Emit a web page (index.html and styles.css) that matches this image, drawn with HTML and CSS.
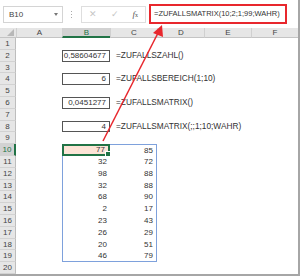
FILE: index.html
```html
<!DOCTYPE html>
<html lang="de">
<head>
    <meta charset="UTF-8">
    <title>ZUFALLSMATRIX</title>
    <link rel="stylesheet" href="styles.css">
</head>
<body>
<div class="window">
    <div class="toolbar">
        <div class="name-box">B10 <span class="caret"></span></div>
        <div class="grip"><span></span><span></span><span></span></div>
        <div class="fx-buttons">
            <span class="fx-btn">&#x2715;</span>
            <span class="fx-btn">&#x2713;</span>
            <span class="fx-btn fx"><i>f</i><small>x</small></span>
        </div>
        <div class="formula">=ZUFALLSMATRIX(10;2;1;99;WAHR)</div>
    </div>

    <div class="sheet" id="sheet">
        <div class="hd corner"><span class="tri"></span></div>
        <div class="hd col">A</div>
        <div class="hd col active">B</div>
        <div class="hd col">C</div>
        <div class="hd col">D</div>
        <div class="hd col">E</div>
        <div class="hd col">F</div>
    </div>

    <svg class="arrow" width="300" height="276" viewBox="0 0 300 276">
        <line x1="103" y1="141" x2="158" y2="33" stroke="#e8272d" stroke-width="1.5"/>
        <polygon points="162,25 163,37 153,33" fill="#e8272d"/>
    </svg>
</div>

<script>
    const cells = {
        2: { b: '0,58604677', c: '=ZUFALLSZAHL()' },
        4: { b: '6', c: '=ZUFALLSBEREICH(1;10)' },
        6: { b: '0,0451277', c: '=ZUFALLSMATRIX()' },
        8: { b: '4', c: '=ZUFALLSMATRIX(;;1;10;WAHR)' }
    };
    const colB = [77, 32, 98, 32, 68, 2, 23, 26, 20, 46];
    const colC = [85, 72, 88, 88, 90, 17, 43, 29, 51, 79];

    const sheet = document.getElementById('sheet');

    function cell(cls, text) {
        const div = document.createElement('div');
        div.className = cls;
        if (text !== undefined) div.textContent = text;
        sheet.appendChild(div);
    }

    for (let r = 1; r <= 20; r++) {
        cell(r === 10 ? 'hd row active' : 'hd row', r);
        cell('c');
        let b = '', c = '', bCls = 'c num', cCls = 'c';
        if (cells[r]) {
            b = cells[r].b;
            c = cells[r].c;
            bCls += ' boxed';
            cCls += ' text';
        }
        if (r >= 10 && r <= 19) {
            b = colB[r - 10];
            c = colC[r - 10];
            cCls = 'c num';
            bCls += ' rng-l';
            cCls += ' rng-r';
            if (r === 10) { bCls += ' rng-t sel'; cCls += ' rng-t'; }
            if (r === 19) { bCls += ' rng-b'; cCls += ' rng-b'; }
        }
        cell(bCls, b);
        cell(cCls, c);
        cell('c');
        cell('c');
        cell('c');
    }
</script>
</body>
</html>
```

FILE: styles.css
```css
body {
    margin: 0;
    background-color: #fff;
    font-family: 'Liberation Sans', Arial, sans-serif;
    font-size: 8px;
    color: #333;
}

.window {
    position: relative;
    width: 298px;
    height: 274px;
    border-right: 2px solid #a6a6a6;
    border-bottom: 2px solid #a6a6a6;
    overflow: hidden;
}

/* formula bar */

.toolbar {
    display: flex;
    align-items: center;
    height: 28px;
    padding-left: 3px;
    box-sizing: border-box;
}

.name-box {
    position: relative;
    width: 60px;
    height: 17px;
    box-sizing: border-box;
    border: 1px solid #d4d4d4;
    padding-left: 5px;
    line-height: 15px;
    color: #444;
}

.caret {
    position: absolute;
    right: 4px;
    top: 6px;
    border-left: 2.5px solid transparent;
    border-right: 2.5px solid transparent;
    border-top: 3px solid #777;
}

.grip {
    display: flex;
    flex-direction: column;
    gap: 2px;
    margin: 0 9px 0 8px;
}

.grip span {
    width: 1px;
    height: 1px;
    background-color: #aaa;
}

.fx-buttons {
    display: flex;
    align-items: center;
    justify-content: space-around;
    width: 65px;
    height: 17px;
    box-sizing: border-box;
    border: 1px solid #dedede;
    margin-right: 3px;
}

.fx-btn {
    color: #c6c6c6;
    font-size: 9px;
}

.fx-btn.fx {
    color: #555;
    font-family: 'Liberation Serif', serif;
    font-size: 9px;
}

.fx small {
    font-size: 6px;
}

.formula {
    width: 138px;
    height: 20px;
    box-sizing: border-box;
    border: 2px solid #e8272d;
    padding-left: 3px;
    line-height: 16px;
    font-size: 7.5px;
    color: #333;
    white-space: nowrap;
    overflow: hidden;
}

/* grid */

.sheet {
    display: grid;
    grid-template-columns: 16px 46px 48px 47px 47px 47px 47px;
    grid-template-rows: 10px repeat(20, 11.8px);
}

.hd {
    background-color: #e6e6e6;
    color: #444;
    text-align: center;
    box-sizing: border-box;
}

.col {
    line-height: 10px;
    border-left: 1px solid #d0d0d0;
    border-bottom: 1px solid #c4c4c4;
}

.col.active {
    background-color: #d2d2d2;
    color: #217346;
    border-bottom: 2px solid #217346;
    line-height: 9px;
}

.corner {
    position: relative;
    border-bottom: 1px solid #c4c4c4;
}

.tri {
    position: absolute;
    right: 2px;
    bottom: 1px;
    border-left: 7px solid transparent;
    border-bottom: 7px solid #b8b8b8;
}

.row {
    line-height: 11.8px;
    border-bottom: 1px solid #d2d2d2;
    border-right: 1px solid #bdbdbd;
}

.row.active {
    background-color: #d2d2d2;
    color: #217346;
    border-right: 2px solid #217346;
}

.c {
    position: relative;
    line-height: 11.8px;
    white-space: nowrap;
    box-sizing: border-box;
}

.num {
    text-align: right;
    padding-right: 3px;
}

.text {
    padding-left: 6px;
    font-size: 8.3px;
}

.boxed {
    border: 1px solid #555;
    line-height: 10px;
}

.rng-l {
    border-left: 1px solid #7ea1dc;
}

.rng-r {
    border-right: 1px solid #7ea1dc;
}

.rng-t {
    border-top: 1px solid #7ea1dc;
}

.rng-b {
    border-bottom: 1px solid #7ea1dc;
}

.sel {
    background-color: #fce4d6;
    border: 2px solid #217346;
    line-height: 8px;
}

.sel::after {
    content: '';
    position: absolute;
    right: -3px;
    bottom: -3px;
    width: 4px;
    height: 4px;
    background-color: #217346;
    border: 1px solid #fff;
}

.arrow {
    position: absolute;
    left: 0;
    top: 0;
    pointer-events: none;
}
```
